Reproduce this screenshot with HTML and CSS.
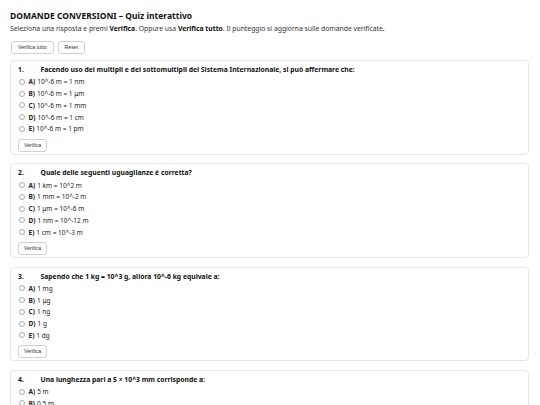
FILE: index.html
```html
<!DOCTYPE html>
<html lang="it">
<head>
<meta charset="utf-8">
<link rel="stylesheet" href="styles.css">
</head>
<body>
<h1 class="title">DOMANDE CONVERSIONI – Quiz interattivo</h1>
<p class="intro">Seleziona una risposta e premi <b>Verifica</b>. Oppure usa <b>Verifica tutto</b>. Il punteggio si aggiorna sulle domande verificate.</p>
<div class="toolbar">
  <button class="btn">Verifica tutto</button>
  <button class="btn">Reset</button>
</div>

<div class="card">
  <div class="q"><span class="num">1.</span><span>Facendo uso dei multipli e dei sottomultipli del Sistema Internazionale, si può affermare che:</span></div>
  <label class="opt"><span class="radio"></span><b>A)</b> 10^-6 m = 1 nm</label>
  <label class="opt"><span class="radio"></span><b>B)</b> 10^-6 m = 1 μm</label>
  <label class="opt"><span class="radio"></span><b>C)</b> 10^-6 m = 1 mm</label>
  <label class="opt"><span class="radio"></span><b>D)</b> 10^-6 m = 1 cm</label>
  <label class="opt"><span class="radio"></span><b>E)</b> 10^-6 m = 1 pm</label>
  <button class="btn small">Verifica</button>
</div>

<div class="card">
  <div class="q"><span class="num">2.</span><span>Quale delle seguenti uguaglianze è corretta?</span></div>
  <label class="opt"><span class="radio"></span><b>A)</b> 1 km = 10^2 m</label>
  <label class="opt"><span class="radio"></span><b>B)</b> 1 mm = 10^-2 m</label>
  <label class="opt"><span class="radio"></span><b>C)</b> 1 μm = 10^-6 m</label>
  <label class="opt"><span class="radio"></span><b>D)</b> 1 nm = 10^-12 m</label>
  <label class="opt"><span class="radio"></span><b>E)</b> 1 cm = 10^-3 m</label>
  <button class="btn small">Verifica</button>
</div>

<div class="card">
  <div class="q"><span class="num">3.</span><span>Sapendo che 1 kg = 10^3 g, allora 10^-6 kg equivale a:</span></div>
  <label class="opt"><span class="radio"></span><b>A)</b> 1 mg</label>
  <label class="opt"><span class="radio"></span><b>B)</b> 1 μg</label>
  <label class="opt"><span class="radio"></span><b>C)</b> 1 ng</label>
  <label class="opt"><span class="radio"></span><b>D)</b> 1 g</label>
  <label class="opt"><span class="radio"></span><b>E)</b> 1 dg</label>
  <button class="btn small">Verifica</button>
</div>

<div class="card">
  <div class="q"><span class="num">4.</span><span>Una lunghezza pari a 5 × 10^3 mm corrisponde a:</span></div>
  <label class="opt"><span class="radio"></span><b>A)</b> 5 m</label>
  <label class="opt"><span class="radio"></span><b>B)</b> 0,5 m</label>
  <label class="opt"><span class="radio"></span><b>C)</b> 50 m</label>
  <label class="opt"><span class="radio"></span><b>D)</b> 500 m</label>
  <label class="opt"><span class="radio"></span><b>E)</b> 5 km</label>
  <button class="btn small">Verifica</button>
</div>
</body>
</html>
```
FILE: styles.css
```css
html, body { margin: 0; padding: 0; background: #fff; }
body {
  padding: 9.5px 11px 10px 10px;
  font-family: "Noto Sans", "Open Sans", sans-serif;
  color: #111;
  font-size: 6.8px;
}
.title {
  margin: 0;
  font-size: 8.5px;
  font-weight: 700;
  line-height: 12px;
}
.intro {
  margin: 2.5px 0 0;
  line-height: 9px;
  color: #333;
}
.intro b { color: #111; }
.toolbar {
  display: flex;
  gap: 4px;
  margin-top: 8px;
  padding-left: 1px;
}
.btn {
  font-family: "Liberation Sans", Arial, sans-serif;
  font-size: 5.2px;
  color: #333;
  background: #fff;
  border: 1px solid #d0d0d0;
  border-radius: 3px;
  height: 13px;
  padding: 0 6px;
  line-height: 11px;
}
.card {
  margin-top: 6px;
  border: 1px solid #e6e6e6;
  border-radius: 4px;
  padding: 4px 7px 2px 6px;
  margin-bottom: 8.5px;
}
.card + .card { margin-top: 0; }
.q {
  display: flex;
  font-weight: 700;
  line-height: 10px;
  margin: 0 0 1px 1px;
}
.num { width: 22.5px; flex: none; }
.opt {
  display: flex;
  align-items: center;
  height: 11.75px;
  color: #222;
  font-size: 6.5px;
}
.opt b { font-weight: 700; margin-right: 2px; }
.radio {
  width: 4px;
  height: 4px;
  border: 0.8px solid #aaa;
  border-radius: 50%;
  margin: 0 3.5px 0 2px;
  flex: none;
}
.btn.small {
  display: block;
  margin-top: 4px;
  margin-left: 1px;
  padding: 0 5px;
  height: 13px;
}
```
